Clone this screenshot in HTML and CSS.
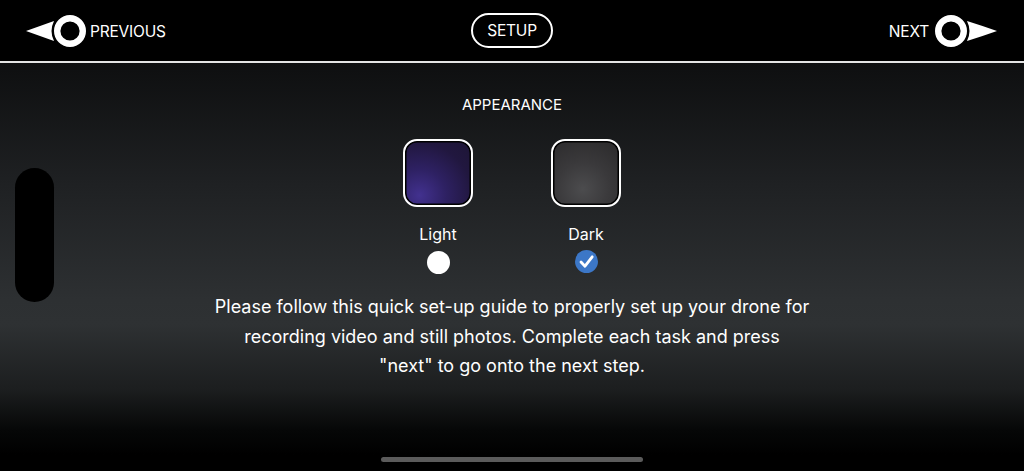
FILE: index.html
```html
<!DOCTYPE html>
<html lang="en">
<head>
    <meta charset="UTF-8">
    <meta name="viewport" content="width=device-width, initial-scale=1.0">
    <title>Setup</title>
    <link rel="stylesheet" href="styles.css">
</head>
<body>
    <header class="topbar">
        <a class="nav-link">
            <svg class="nav-icon" width="62" height="32" viewBox="0 0 62 32">
                <path d="M0 16 Q14 11 28 6 Q23 16 28 26 Q14 21 0 16 Z" fill="#fff"/>
                <circle cx="44" cy="16" r="12.8" fill="none" stroke="#fff" stroke-width="6.4"/>
            </svg>
            <span>PREVIOUS</span>
        </a>
        <div class="setup-pill">SETUP</div>
        <a class="nav-link next">
            <span>NEXT</span>
            <svg class="nav-icon" width="62" height="32" viewBox="0 0 62 32">
                <circle cx="16" cy="16" r="12.8" fill="none" stroke="#fff" stroke-width="6.4"/>
                <path d="M62 16 Q48 11 32 6 Q37 16 32 26 Q48 21 62 16 Z" fill="#fff"/>
            </svg>
        </a>
    </header>

    <main class="content">
        <h2 class="title">APPEARANCE</h2>
        <div class="themes">
            <div class="theme">
                <div class="swatch swatch-light"></div>
                <div class="theme-label">Light</div>
                <span class="radio"></span>
            </div>
            <div class="theme">
                <div class="swatch swatch-dark"></div>
                <div class="theme-label">Dark</div>
                <svg class="radio-checked" width="23" height="23" viewBox="0 0 23 23">
                    <circle cx="11.5" cy="11.5" r="11.5" fill="#3c77c7"/>
                    <path d="M6 12 L10 16.2 L17.2 6.8" fill="none" stroke="#fff" stroke-width="2.8" stroke-linecap="round" stroke-linejoin="round"/>
                </svg>
            </div>
        </div>
        <p class="intro">Please follow this quick set-up guide to properly set up your drone for recording video and still photos. Complete each task and press<br>"next" to go onto the next step.</p>
    </main>

    <div class="sensor"></div>
    <div class="home-bar"></div>
</body>
</html>
```

FILE: styles.css
```css
body {
    font-family: Inter, 'Liberation Sans', sans-serif;
    margin: 0;
    padding: 0;
    background-color: #000;
    color: #fff;
    height: 471px;
    overflow: hidden;
    position: relative;
}
.topbar {
    height: 61px;
    display: grid;
    grid-template-columns: 1fr auto 1fr;
    align-items: center;
    padding: 0 27px 0 26px;
    border-bottom: 2px solid #e4e4e4;
    font-size: 15.5px;
    letter-spacing: -0.2px;
}
.nav-link {
    display: flex;
    align-items: center;
    gap: 2px;
    color: #fff;
    padding-top: 1px;
}
.nav-link.next {
    justify-content: flex-end;
    gap: 6px;
}
.nav-icon {
    display: block;
}
.setup-pill {
    border: 2px solid #fff;
    border-radius: 18px;
    padding: 0 14px;
    height: 31px;
    line-height: 31px;
    margin-left: 1px;
}
.content {
    height: 408px;
    padding-top: 33px;
    box-sizing: border-box;
    display: flex;
    flex-direction: column;
    align-items: center;
    background: linear-gradient(to bottom, #0e0f10 0%, #1f2123 30%, #2d3032 58%, #2e3133 64%, #1c1e1f 80%, #060707 90%, #000 96%);
}
.title {
    margin: 0;
    font-size: 15px;
    font-weight: normal;
    line-height: 18px;
}
.themes {
    display: flex;
    gap: 48px;
    margin-top: 25px;
}
.theme {
    width: 100px;
    display: flex;
    flex-direction: column;
    align-items: center;
}
.swatch {
    width: 66px;
    height: 64px;
    border: 2px solid #fff;
    border-radius: 14px;
    box-shadow: inset 0 0 0 1.5px #000;
}
.swatch-light {
    background: radial-gradient(circle at 22% 85%, #42318f 0%, #2e2163 35%, #21173f 70%, #1d1535 100%);
}
.swatch-dark {
    background: radial-gradient(circle at 45% 75%, #4c4c4e 0%, #3a393b 45%, #2a292a 100%);
}
.theme-label {
    margin-top: 17px;
    font-size: 16px;
    line-height: 20px;
}
.radio {
    display: block;
    width: 23px;
    height: 23px;
    margin-top: 7px;
    border-radius: 50%;
    background-color: #fff;
}
.radio-checked {
    display: block;
    margin-top: 6px;
}
.intro {
    width: 620px;
    margin: 18px 0 0;
    text-align: center;
    font-size: 18px;
    line-height: 29.5px;
}
.sensor {
    position: absolute;
    left: 15px;
    top: 168px;
    width: 39px;
    height: 134px;
    border-radius: 20px;
    background-color: #000;
}
.home-bar {
    position: absolute;
    left: 381px;
    bottom: 9px;
    width: 262px;
    height: 5px;
    border-radius: 3px;
    background-color: #5b5b5b;
}
```
